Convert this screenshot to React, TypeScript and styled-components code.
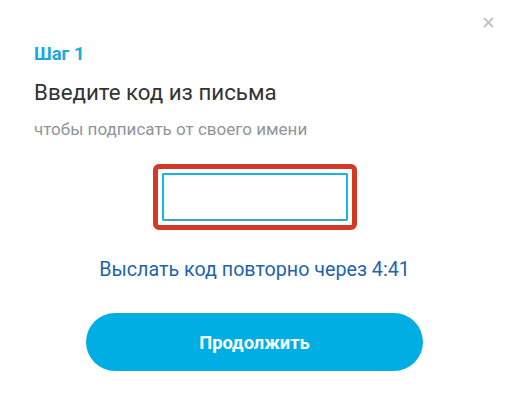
import styled, { createGlobalStyle } from "styled-components";

const GlobalStyle = createGlobalStyle`
  html, body {
    margin: 0;
    padding: 0;
    background: #ffffff;
  }
  body {
    font-family: Roboto, "Liberation Sans", Arial, sans-serif;
  }
`

const Dialog = styled.div`
  position: relative;
  width: 512px;
  height: 415px;
  box-sizing: border-box;
  padding: 43px 37px 0 34px;
  display: flex;
  flex-direction: column;
  background: #fff;
`

const CloseButton = styled.button`
  position: absolute;
  top: 15px;
  right: 17px;
  width: 14px;
  height: 14px;
  padding: 0;
  border: none;
  background: none;
  cursor: pointer;
  display: flex;
  align-items: center;
  justify-content: center;
`

const Step = styled.div`
  font-size: 18.5px;
  line-height: 22px;
  font-weight: 700;
  color: #1aa9dc;
`

const Title = styled.h2`
  margin: 14px 0 0;
  font-size: 22.3px;
  line-height: 26px;
  font-weight: 400;
  color: #333333;
`

const Subtitle = styled.p`
  margin: 13px 0 0;
  font-size: 17px;
  line-height: 22px;
  color: #8f959a;
`

const Center = styled.div<{ gap: number }>`
  display: flex;
  justify-content: center;
  margin-top: ${p => p.gap}px;
`

const Highlight = styled.div`
  border: 5px solid #d13a26;
  border-radius: 6px;
  padding: 4px;
`

const CodeInput = styled.input`
  display: block;
  box-sizing: border-box;
  width: 186px;
  height: 48px;
  border: 2px solid #19b4e6;
  border-bottom-color: #3aa3c4;
  border-radius: 2px;
  outline: none;
  font-family: inherit;
  font-size: 20px;
  text-align: center;
  color: #333;
`

const ResendLink = styled.a`
  font-size: 19.7px;
  line-height: 22px;
  color: #1f63ad;
  text-decoration: none;
  cursor: pointer;
`

const SubmitButton = styled.button`
  width: 337px;
  height: 58px;
  border: none;
  border-radius: 29px;
  background: #00aee4;
  color: #fff;
  font-family: inherit;
  font-size: 18.3px;
  font-weight: 700;
  cursor: pointer;
`

export default function App() {
  return (
    <>
      <GlobalStyle />
      <Dialog>
        <CloseButton aria-label="Закрыть">
          <svg width="11" height="11" viewBox="0 0 11 11">
            <path d="M1 1 L10 10 M10 1 L1 10" stroke="#c4c4c4" strokeWidth="2" />
          </svg>
        </CloseButton>
        <Step>Шаг 1</Step>
        <Title>Введите код из письма</Title>
        <Subtitle>чтобы подписать от своего имени</Subtitle>
        <Center gap={24}>
          <Highlight>
            <CodeInput type="text" inputMode="numeric" />
          </Highlight>
        </Center>
        <Center gap={29}>
          <ResendLink>Выслать код повторно через 4:41</ResendLink>
        </Center>
        <Center gap={32}>
          <SubmitButton>Продолжить</SubmitButton>
        </Center>
      </Dialog>
    </>
  )
}
